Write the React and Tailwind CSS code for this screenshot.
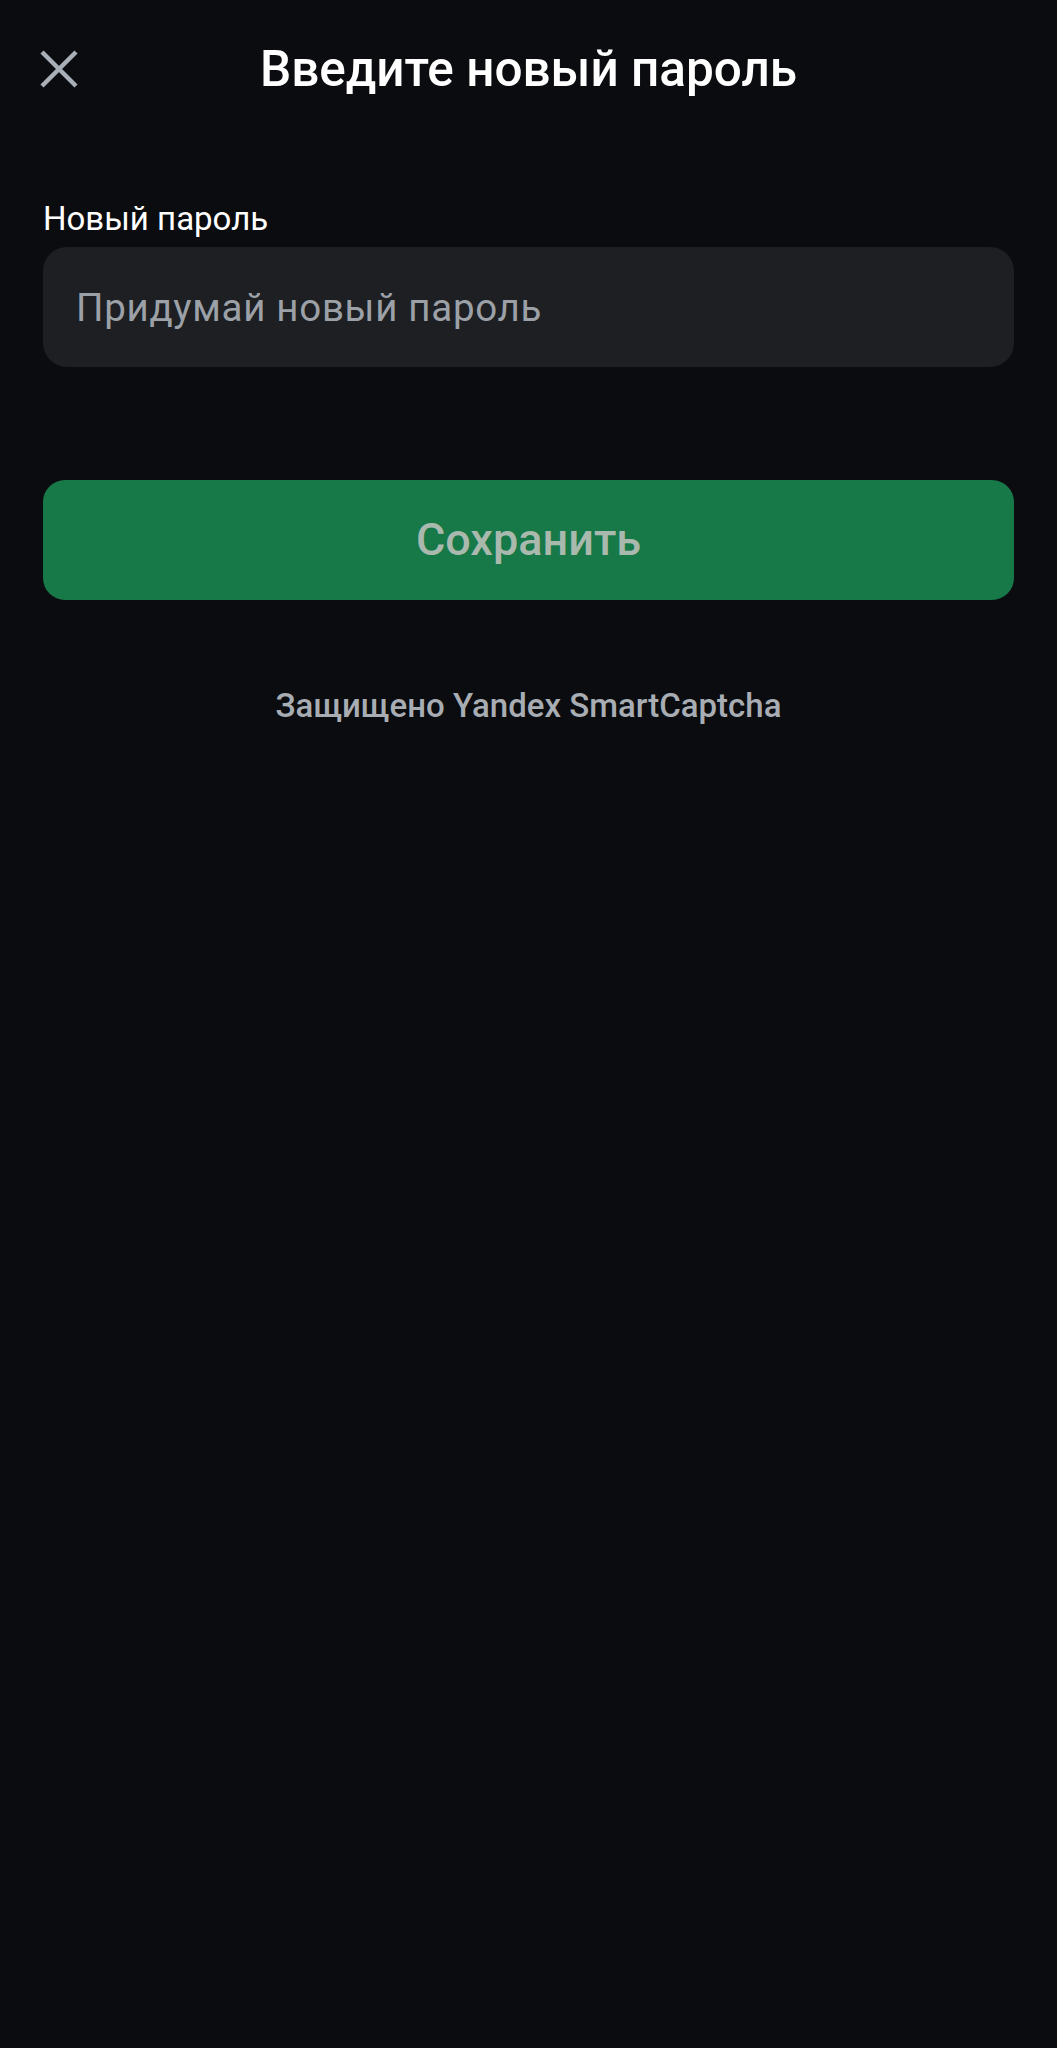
import React from 'react'

const font = { fontFamily: 'Roboto, "Noto Sans", sans-serif' }

function CloseIcon() {
  return (
    <svg width="38" height="38" viewBox="0 0 38 38" fill="none">
      <path d="M2 2L36 36M36 2L2 36" stroke="#a9afb7" strokeWidth="4.5" />
    </svg>
  )
}

export default function App() {
  return (
    <div className="min-h-[2048px] w-full bg-[#0b0c0f] text-white" style={font}>
      {/* Header */}
      <div className="grid grid-cols-[80px_1fr_80px] items-center pt-[41px]">
        <button type="button" className="ml-[40px] flex h-[56px] items-center">
          <CloseIcon />
        </button>
        <h1 className="text-center text-[49.5px] leading-[56px] font-medium">Введите новый пароль</h1>
        <div />
      </div>

      <div className="px-[43px]">
        {/* Field */}
        <div className="mt-[105px]">
          <label className="block text-[33px] leading-[34px]">Новый пароль</label>
          <input
            type="password"
            placeholder="Придумай новый пароль"
            className="mt-[11px] h-[120px] w-full rounded-[24px] bg-[#1d1f22] px-[33px] text-[38.5px] tracking-[0.7px] text-white outline-none placeholder:text-[#9ca1a8]"
          />
        </div>

        {/* Save */}
        <button
          type="button"
          className="mt-[113px] flex h-[120px] w-full items-center justify-center rounded-[22px] bg-[#177848] text-[45px] font-medium text-[#a9b9ae]"
        >
          Сохранить
        </button>

        <div className="mt-[90px] text-center text-[33px] leading-[32px] font-medium text-[#a8adb4]">
          Защищено Yandex SmartCaptcha
        </div>
      </div>
    </div>
  )
}
